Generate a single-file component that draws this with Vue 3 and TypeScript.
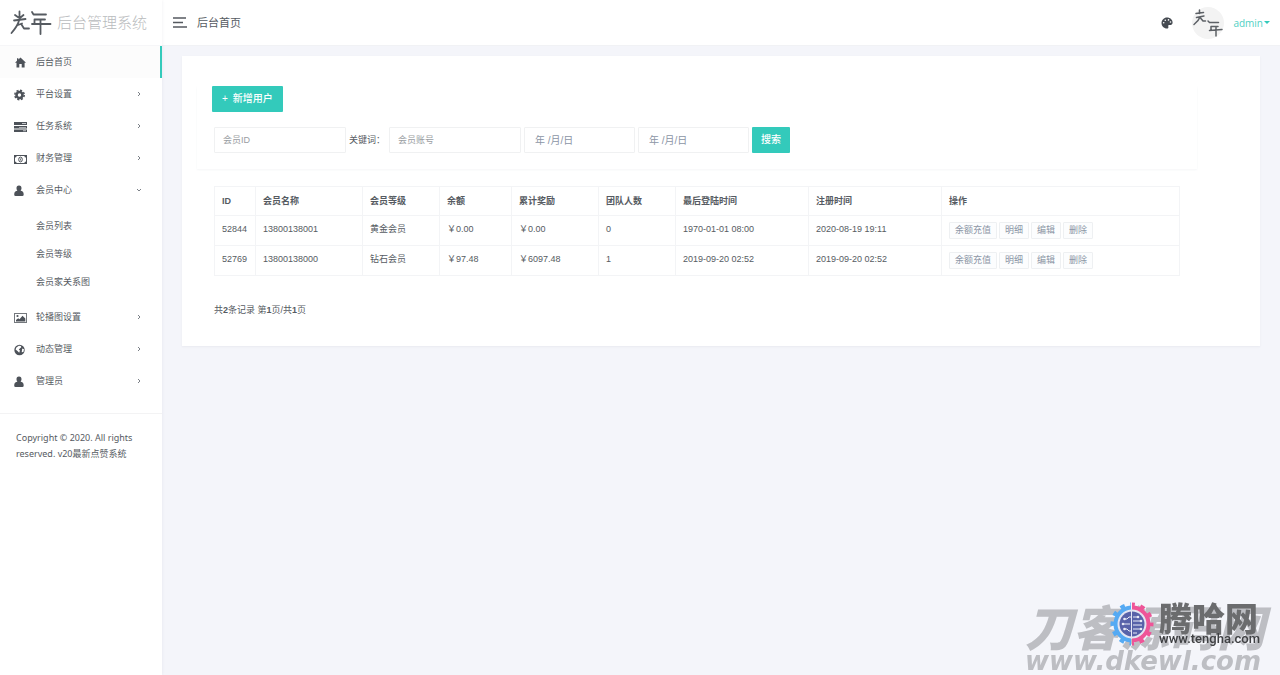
<script setup lang="ts">
import { ref } from 'vue'

type IconName = 'home' | 'gear' | 'tasks' | 'money' | 'user' | 'image' | 'globe'

interface NavItem {
  label: string
  icon: IconName
  active?: boolean
  children?: string[]
  arrow?: boolean
}

interface Member {
  id: string
  name: string
  level: string
  balance: string
  reward: string
  team: string
  lastLogin: string
  registered: string
}

const navItems: NavItem[] = [
  { label: '后台首页', icon: 'home', active: true },
  { label: '平台设置', icon: 'gear', arrow: true },
  { label: '任务系统', icon: 'tasks', arrow: true },
  { label: '财务管理', icon: 'money', arrow: true },
  { label: '会员中心', icon: 'user', arrow: true, children: ['会员列表', '会员等级', '会员家关系图'] },
  { label: '轮播图设置', icon: 'image', arrow: true },
  { label: '动态管理', icon: 'globe', arrow: true },
  { label: '管理员', icon: 'user', arrow: true },
]

const columns = ['ID', '会员名称', '会员等级', '余额', '累计奖励', '团队人数', '最后登陆时间', '注册时间', '操作']
const actions = ['余额充值', '明细', '编辑', '删除']

const members: Member[] = [
  { id: '52844', name: '13800138001', level: '黄金会员', balance: '0.00', reward: '0.00', team: '0', lastLogin: '1970-01-01 08:00', registered: '2020-08-19 19:11' },
  { id: '52769', name: '13800138000', level: '钻石会员', balance: '97.48', reward: '6097.48', team: '1', lastLogin: '2019-09-20 02:52', registered: '2019-09-20 02:52' },
]

const memberId = ref('')
const account = ref('')
const startDate = ref('')
const endDate = ref('')
</script>

<template>
  <div class="layout">
    <aside class="sidebar">
      <a class="brand" href="#">
        <svg class="brand-mark" viewBox="0 0 42 26" aria-hidden="true">
          <g fill="none" stroke="#565b61" stroke-width="1.800" stroke-linecap="round" stroke-linejoin="round">
            <path d="M9.500 1.500V8M5 5L8.500 7.500M13.500 5L10.500 7.500M4 10.500L15.500 9" />
            <path d="M9 10.500C8 15 4.500 19.500 1.500 23M8 15L12 13.500M11.500 14.500L14 18.500H19" />
            <path d="M22 2L23.500 4.500H36M24.500 9.500H35M24.500 9.500V13.500M22 14H40.500M30.500 9.500V24" />
          </g>
        </svg>
        <span>后台管理系统</span>
      </a>
      <nav>
        <ul class="nav">
          <li v-for="item in navItems" :key="item.label">
            <a href="#" class="nav-link" :class="{ active: item.active }">
              <svg v-if="item.icon === 'home'" class="nav-icon" viewBox="0 0 13 13" aria-hidden="true">
                <path fill="#4d5259" d="M6.500 1.500L12 6.700H10.600V11.500H7.700V8H5.300V11.500H2.500V6.700H1L3 4.800V2.300H4.400V3.500Z" />
              </svg>
              <svg v-else-if="item.icon === 'gear'" class="nav-icon" viewBox="0 0 13 13" aria-hidden="true">
                <circle cx="5.500" cy="7" r="3" fill="none" stroke="#4d5259" stroke-width="2.600" />
                <circle cx="5.500" cy="7" r="4.700" fill="none" stroke="#4d5259" stroke-width="1.500" stroke-dasharray="2.100 1.590" />
              </svg>
              <svg v-else-if="item.icon === 'tasks'" class="nav-icon" viewBox="0 0 13 13" aria-hidden="true">
                <path fill="#4d5259" d="M0 2H13V5H0ZM0 6H13V8.500H0ZM0 9.500H13V12H0Z" />
                <path fill="#c4c6c9" d="M8 3H12V4H8ZM5 7H12V7.800H5ZM9 10.300H12V11.200H9Z" />
              </svg>
              <svg v-else-if="item.icon === 'money'" class="nav-icon" viewBox="0 0 13 13" aria-hidden="true">
                <rect x="0.500" y="3.500" width="12" height="8" fill="none" stroke="#4d5259" />
                <path fill="#4d5259" d="M1 4H2.600Q2.600 5.500 1 5.600ZM12 4H10.400Q10.400 5.500 12 5.600ZM1 11H2.600Q2.600 9.500 1 9.400ZM12 11H10.400Q10.400 9.500 12 9.400Z" />
                <ellipse cx="6.500" cy="7.500" rx="1.800" ry="2.400" fill="none" stroke="#4d5259" />
                <path d="M6.500 6.500V8.500" stroke="#4d5259" stroke-width=".8" />
              </svg>
              <svg v-else-if="item.icon === 'user'" class="nav-icon" viewBox="0 0 13 13" aria-hidden="true">
                <path fill="#4d5259" d="M5 1.500C6.800 1.500 7.600 2.800 7.500 4.400C7.400 5.400 7 6.200 6.600 6.800C8.500 7 9.700 8 9.700 10.500Q9.700 12 8.300 12H1.500Q.2 12 .2 10.500C.2 8 1.500 7 3.400 6.800C2.900 6.200 2.500 5.400 2.500 4.400C2.400 2.800 3.200 1.500 5 1.500Z" />
              </svg>
              <svg v-else-if="item.icon === 'image'" class="nav-icon" viewBox="0 0 13 13" aria-hidden="true">
                <rect x="0.500" y="2.500" width="12" height="9" fill="none" stroke="#74787d" />
                <circle cx="3.500" cy="5" r="1.100" fill="#4d5259" />
                <path fill="#4d5259" d="M2 10.500V9L4.200 7.200L5.500 8.200L8.500 4.800L11.300 7.500V10.500Z" />
              </svg>
              <svg v-else class="nav-icon" viewBox="0 0 13 13" aria-hidden="true">
                <circle cx="5.500" cy="7" r="5.200" fill="#4d5259" />
                <path fill="#fff" d="M4.800 2.700L6.800 3L7.300 4.300L5.800 5.500L4.800 6.700L6 7.500L5.200 9.800L3.500 8L1.600 6.600L2.400 4.500ZM8.200 5.500L10 6.300L9.400 9L7.700 9.200Z" />
              </svg>
              <span class="nav-label">{{ item.label }}</span>
              <svg v-if="item.arrow" class="chevron" viewBox="0 0 6 6" aria-hidden="true">
                <path :d="item.children ? 'M1 2L3 4L5 2' : 'M2 1L4 3L2 5'" fill="none" stroke="#7b8087" />
              </svg>
            </a>
            <ul v-if="item.children" class="subnav">
              <li v-for="child in item.children" :key="child"><a href="#">{{ child }}</a></li>
            </ul>
          </li>
        </ul>
      </nav>
      <p class="copyright">Copyright © 2020. All rights reserved. v20最新点赞系统</p>
    </aside>

    <div class="page">
      <header class="topbar">
        <button class="icon-button" type="button" aria-label="菜单">
          <svg class="menu-icon" viewBox="0 0 14 11" aria-hidden="true">
            <path d="M0 1H13M0 5.500H10M0 10H14" stroke="#555a60" stroke-width="1.500" fill="none" />
          </svg>
        </button>
        <span class="page-title">后台首页</span>
        <button class="icon-button palette" type="button" aria-label="主题">
          <svg class="palette-icon" viewBox="0 0 12 12" aria-hidden="true">
            <path fill="#454a51" d="M6 .5C9.200 .5 11.600 2.700 11.600 5.400C11.600 7.200 10.300 8 8.800 8C7.500 8 7 8.500 7.300 9.400C7.700 10.500 7.200 11.500 6 11.500C2.900 11.500 .5 9 .5 6S3 .5 6 .5Z" />
            <g fill="#fff"><circle cx="2.700" cy="5.800" r=".8" /><circle cx="4.300" cy="3.200" r=".8" /><circle cx="7.500" cy="2.900" r=".8" /><circle cx="9.500" cy="5" r=".8" /></g>
          </svg>
        </button>
        <svg class="avatar" viewBox="0 0 32 32" aria-hidden="true">
          <circle cx="16" cy="16" r="16" fill="#f3f3f3" />
          <g fill="none" stroke="#5d6166" stroke-width="1.500" stroke-linecap="round" stroke-linejoin="round">
            <path d="M7.500 3V6.500M4 6.500L11.500 5.500M4.500 10.500L12 9M8 10C7 13 4.500 15.500 2 17.500M8.500 11L11 14H13.500" />
            <path d="M16 14L17.500 15.500H26.500M19 19.500H26M19 19.500V23M17.500 23.500L30 22.500M24 19.500V29" />
          </g>
        </svg>
        <button class="user-menu" type="button">admin<span class="caret"></span></button>
      </header>

      <main class="content">
        <section class="card">
          <form class="toolbar" @submit.prevent>
            <button class="btn" type="button"><span class="plus">+</span>新增用户</button>
            <div class="filters">
              <input v-model="memberId" class="field" type="text" placeholder="会员ID" aria-label="会员ID" />
              <label for="account">关键词：</label>
              <input id="account" v-model="account" class="field" type="text" placeholder="会员账号" />
              <input v-model="startDate" class="field date" type="text" placeholder="年 /月/日" aria-label="开始日期" />
              <input v-model="endDate" class="field date" type="text" placeholder="年 /月/日" aria-label="结束日期" />
              <button class="btn search" type="submit">搜索</button>
            </div>
          </form>

          <div class="records">
            <table>
              <colgroup>
                <col class="c-id" /><col class="c-name" /><col class="c-level" /><col class="c-balance" /><col class="c-reward" />
                <col class="c-team" /><col class="c-time" /><col class="c-time" /><col />
              </colgroup>
              <thead>
                <tr><th v-for="column in columns" :key="column" scope="col">{{ column }}</th></tr>
              </thead>
              <tbody>
                <tr v-for="member in members" :key="member.id">
                  <td>{{ member.id }}</td>
                  <td>{{ member.name }}</td>
                  <td>{{ member.level }}</td>
                  <td>￥{{ member.balance }}</td>
                  <td>￥{{ member.reward }}</td>
                  <td>{{ member.team }}</td>
                  <td>{{ member.lastLogin }}</td>
                  <td>{{ member.registered }}</td>
                  <td class="action-cell">
                    <div class="actions">
                      <button v-for="action in actions" :key="action" type="button">{{ action }}</button>
                    </div>
                  </td>
                </tr>
              </tbody>
            </table>
            <p class="summary">共<b>2</b>条记录 第<b>1</b>页/共<b>1</b>页</p>
          </div>
        </section>
      </main>
    </div>

    <div class="watermark">
      <div class="mark-name">刀客源码网</div>
      <div class="mark-url">www.dkewl.com</div>
      <div class="badge">
        <svg class="badge-gear" viewBox="0 0 44 46" aria-hidden="true">
          <defs>
            <clipPath id="gear-left"><rect x="0" y="0" width="21" height="46" /></clipPath>
            <clipPath id="gear-right"><rect x="22" y="0" width="22" height="46" /></clipPath>
          </defs>
          <circle cx="22" cy="23" r="15" fill="#e3e5f2" />
          <g fill="none" stroke="#55aaf3" clip-path="url(#gear-left)">
            <circle cx="22" cy="23" r="16.500" stroke-width="4" />
            <circle cx="22" cy="23" r="19.500" stroke-width="4" stroke-dasharray="4.600 5.610" stroke-dashoffset="2.300" />
          </g>
          <g fill="none" stroke="#ee5598" clip-path="url(#gear-right)">
            <circle cx="22" cy="23" r="16.500" stroke-width="4" />
            <circle cx="22" cy="23" r="19.500" stroke-width="4" stroke-dasharray="4.600 5.610" stroke-dashoffset="2.300" />
          </g>
          <circle cx="22" cy="23" r="12.500" fill="#5862a9" />
          <g fill="none" stroke="#e8eaf6" stroke-width="1">
            <path d="M21.500 10V36M12 23H20M14 18H17L19 16H21M14 28H17L19 30H21M23 16H28M23 20H31M23 24H32M23 28H31M23 32H27" />
          </g>
          <g fill="#e8eaf6">
            <circle cx="13" cy="23" r="1.300" /><circle cx="14.500" cy="18" r="1.300" /><circle cx="14.500" cy="28" r="1.300" />
            <circle cx="28" cy="16" r="1.300" /><circle cx="31" cy="20" r="1.300" /><circle cx="31" cy="28" r="1.300" />
          </g>
        </svg>
        <div class="badge-text">
          <div class="badge-name">腾哈网</div>
          <div class="badge-url">www.tengha.com</div>
        </div>
      </div>
    </div>
  </div>
</template>

<style>
body {
  margin: 0;
  background: #f4f5fa;
}
</style>

<style scoped>
.layout {
  display: flex;
  min-height: 100vh;
  background: #f4f5fa;
  color: #565b62;
  font: 9px/16px "Liberation Sans", "Noto Sans CJK SC", sans-serif;
}

ul,
p {
  margin: 0;
  padding: 0;
  list-style: none;
}

a {
  color: inherit;
  text-decoration: none;
}

button,
input {
  box-sizing: border-box;
  font: inherit;
}

button {
  border: 0;
  padding: 0;
  background: none;
  cursor: pointer;
}

.sidebar {
  flex: 0 0 162px;
  background: #fff;
  box-shadow: 0 0 3px rgba(60, 70, 90, 0.08);
  z-index: 1;
}

.brand {
  display: flex;
  align-items: center;
  gap: 5px;
  height: 45px;
  padding-left: 10px;
  border-bottom: 1px solid #f6f6f8;
  color: #b9bbbd;
  font-size: 15px;
  font-weight: 300;
  white-space: nowrap;
}

.brand-mark {
  width: 42px;
  height: 26px;
}

.nav-link {
  display: flex;
  align-items: center;
  height: 32px;
  padding: 0 18px 0 14px;
  border-right: 2px solid transparent;
}

.nav-link.active {
  background: #fcfcfc;
  border-right-color: #33cabb;
}

.nav-icon {
  width: 13px;
  height: 13px;
  margin-right: 9px;
}

.nav-label {
  flex: 1;
}

.chevron {
  width: 6px;
  height: 6px;
}

.subnav {
  padding: 6px 0 5px 36px;
  line-height: 28px;
}

.copyright {
  margin-top: 16px;
  padding: 16px;
  border-top: 1px solid #f3f3f4;
  font-family: "Noto Sans", "Noto Sans CJK SC", sans-serif;
}

.page {
  flex: 1;
  min-width: 0;
}

.topbar {
  display: flex;
  align-items: center;
  height: 45px;
  padding: 0 10px 0 11px;
  background: #fff;
  border-bottom: 1px solid #f1f2f5;
}

.icon-button {
  display: flex;
}

.menu-icon {
  width: 14px;
  height: 11px;
}

.page-title {
  margin-left: 10px;
  font-size: 11px;
}

.palette {
  margin-left: auto;
}

.palette-icon {
  width: 12px;
  height: 12px;
}

.avatar {
  width: 32px;
  height: 32px;
  margin: 0 9px 0 19px;
}

.user-menu {
  display: flex;
  align-items: center;
  gap: 1px;
  color: #4fd0c3;
  font-family: "Open Sans", sans-serif;
  font-size: 10px;
}

.caret {
  border: 3px solid transparent;
  border-top-color: #33cabb;
  border-bottom: 0;
}

.content {
  padding: 10px 20px;
}

.card {
  padding: 30px 63px 28px 15px;
  background: #fff;
  box-shadow: 0 1px 2px rgba(60, 70, 90, 0.06);
}

.toolbar {
  padding: 0 15px 16px;
  box-shadow: 0 1px 2px rgba(60, 70, 90, 0.05);
}

.btn {
  height: 26px;
  padding: 0 10px;
  border-radius: 1px;
  background: #33cabb;
  color: #fff;
  font-size: 10px;
  font-weight: 500;
}

.plus {
  margin-right: 5px;
}

.filters {
  display: flex;
  align-items: center;
  gap: 3px;
  margin: 15px 0 0 2px;
}

.filters label {
  width: 37px;
  white-space: nowrap;
}

.field {
  width: 132px;
  height: 26px;
  padding: 0 8px;
  border: 1px solid #f0f1f2;
  border-radius: 1px;
  background: #fff;
  color: #4d5259;
  outline: 0;
}

.field::placeholder {
  color: #999da2;
  opacity: 1;
}

.date {
  width: 111px;
  padding: 0 10px;
  font-size: 10px;
}

.date::placeholder {
  color: #8b95a5;
}

.search {
  padding: 0 9px;
}

.records {
  padding: 17px 17px 0;
}

table {
  width: 100%;
  table-layout: fixed;
  border-collapse: collapse;
}

.c-id {
  width: 41px;
}

.c-name {
  width: 107px;
}

.c-level {
  width: 77px;
}

.c-balance {
  width: 72px;
}

.c-reward {
  width: 87px;
}

.c-team {
  width: 77px;
}

.c-time {
  width: 133px;
}

th,
td {
  box-sizing: border-box;
  height: 30px;
  padding: 0 7px 3px;
  border: 1px solid #f3f4f6;
  text-align: left;
  white-space: nowrap;
}

th {
  height: 29px;
  padding-bottom: 1px;
}

.action-cell {
  padding-bottom: 0;
}

.actions {
  display: flex;
  gap: 2px;
}

.actions button {
  height: 17px;
  padding: 0 5px;
  border: 1px solid #eef0f2;
  border-radius: 1px;
  background: #fcfdfe;
  color: #8b95a5;
  line-height: 15px;
}

.summary {
  margin-top: 26px;
}

.watermark {
  position: fixed;
  right: 15px;
  bottom: 0;
  color: #bdbec3;
  font-weight: 900;
  font-style: italic;
  white-space: nowrap;
  pointer-events: none;
}

.mark-name {
  font-family: "Noto Sans CJK SC", sans-serif;
  font-size: 48px;
  line-height: 44px;
}

.mark-url {
  font-family: "DejaVu Sans", sans-serif;
  font-size: 26px;
  line-height: 28px;
}

.badge {
  position: absolute;
  right: 5px;
  top: -2px;
  display: flex;
  align-items: center;
  gap: 5px;
  font-style: normal;
}

.badge-gear {
  width: 44px;
  height: 46px;
}

.badge-name {
  color: #6b6c6e;
  font-family: "Noto Sans CJK SC", sans-serif;
  font-size: 33px;
  line-height: 30px;
}

.badge-url {
  color: #3f4043;
  font-family: Roboto, sans-serif;
  font-size: 13px;
  font-weight: 500;
  line-height: 14px;
}
</style>
